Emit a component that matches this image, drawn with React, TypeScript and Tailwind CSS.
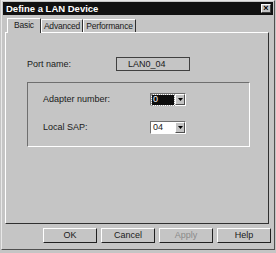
import React from "react";

const tabs = [
  { label: "Basic", width: "w-[34px]", active: true },
  { label: "Advanced", width: "w-[42px]", active: false },
  { label: "Performance", width: "w-[53px]", active: false },
];

const buttons = [
  { label: "OK", disabled: false },
  { label: "Cancel", disabled: false },
  { label: "Apply", disabled: true },
  { label: "Help", disabled: false },
];

function Combo({ value, selected }: { value: string; selected?: boolean }) {
  return (
    <div className="flex h-[13px] w-[36px] border border-t-[#6f6f6f] border-l-[#6f6f6f] border-r-white border-b-white bg-white">
      <div className="flex flex-1 items-center px-[1px]">
        <span
          className={`flex h-[10px] flex-1 items-center pl-[1px] text-[9px] leading-none ${
            selected ? "bg-[#0c0c0c] text-white outline outline-1 outline-dotted outline-[#999]" : "text-[#1a1a1a]"
          }`}
        >
          {value}
        </span>
      </div>
      <div className="flex w-[10px] items-center justify-center border border-t-white border-l-white border-r-[#505050] border-b-[#505050] bg-[#c4c4c4]">
        <svg width="5" height="3" viewBox="0 0 5 3">
          <path d="M0 0h5L2.5 3z" fill="#000" />
        </svg>
      </div>
    </div>
  );
}

export default function App() {
  return (
    <div
      className="flex h-[253px] w-[276px] flex-col bg-[#c5c5c5] text-[#1a1a1a]"
      style={{ fontFamily: '"Liberation Sans", Arial, sans-serif' }}
    >
      <div className="mx-[1px] h-[250px] border border-l-[#e8e8e8] border-t-[#e8e8e8] border-r-[#505050] border-b-[#505050] pt-[1px]">
        {/* title bar */}
        <div className="mx-[1px] flex h-[13px] items-center justify-between bg-[#111] pl-[3px] pr-[2px]">
          <span className="text-[9.5px] font-bold leading-none text-white">Define a LAN Device</span>
          <div className="flex h-[9px] w-[10px] items-center justify-center border border-t-white border-l-white border-r-[#404040] border-b-[#404040] bg-[#c4c4c4]">
            <span className="text-[9px] font-bold leading-none text-black">×</span>
          </div>
        </div>

        {/* tabs */}
        <div className="ml-[5px] mt-[3px] flex items-end">
          {tabs.map((t) => (
            <div
              key={t.label}
              className={`flex items-center justify-center whitespace-nowrap border-l border-t border-r border-l-white border-t-white border-r-[#303030] text-[8.5px] tracking-[-0.2px] leading-none ${t.width} ${
                t.active ? "relative z-10 -mb-[1px] h-[15px] bg-[#c5c5c5] pb-[1px]" : "h-[13px]"
              }`}
            >
              {t.label}
            </div>
          ))}
        </div>

        {/* tab panel */}
        <div className="ml-[3px] h-[192px] w-[264px] border border-l-white border-t-white border-r-[#303030] border-b-[#303030] pl-[21px] pt-[24px]">
          <div className="flex h-[14px] items-center">
            <span className="w-[89px] text-[9px] leading-none">Port name:</span>
            <div className="flex h-[14px] w-[74px] items-center border border-[#404040] pl-[11px] text-[9px] leading-none">
              LAN0_04
            </div>
          </div>

          <div className="mt-[11px] h-[65px] w-[223px] border border-l-[#6f6f6f] border-t-[#6f6f6f] border-r-white border-b-white pl-[15px] pt-[10px]">
            <div className="flex h-[13px] items-center">
              <span className="w-[107px] text-[9px] leading-none">Adapter number:</span>
              <Combo value="0" selected />
            </div>
            <div className="mt-[15px] flex h-[13px] items-center">
              <span className="w-[107px] text-[9px] leading-none">Local SAP:</span>
              <Combo value="04" />
            </div>
          </div>
        </div>

        {/* buttons */}
        <div className="ml-[41px] mt-[4px] flex gap-[4px]">
          {buttons.map((b) => (
            <div
              key={b.label}
              className={`flex h-[15px] w-[54px] items-center justify-center border border-l-white border-t-white border-r-[#202020] border-b-[#202020] text-[9px] leading-none ${
                b.disabled ? "text-[#8a8a8a]" : "text-[#1a1a1a]"
              }`}
            >
              {b.label}
            </div>
          ))}
        </div>
      </div>
    </div>
  );
}
